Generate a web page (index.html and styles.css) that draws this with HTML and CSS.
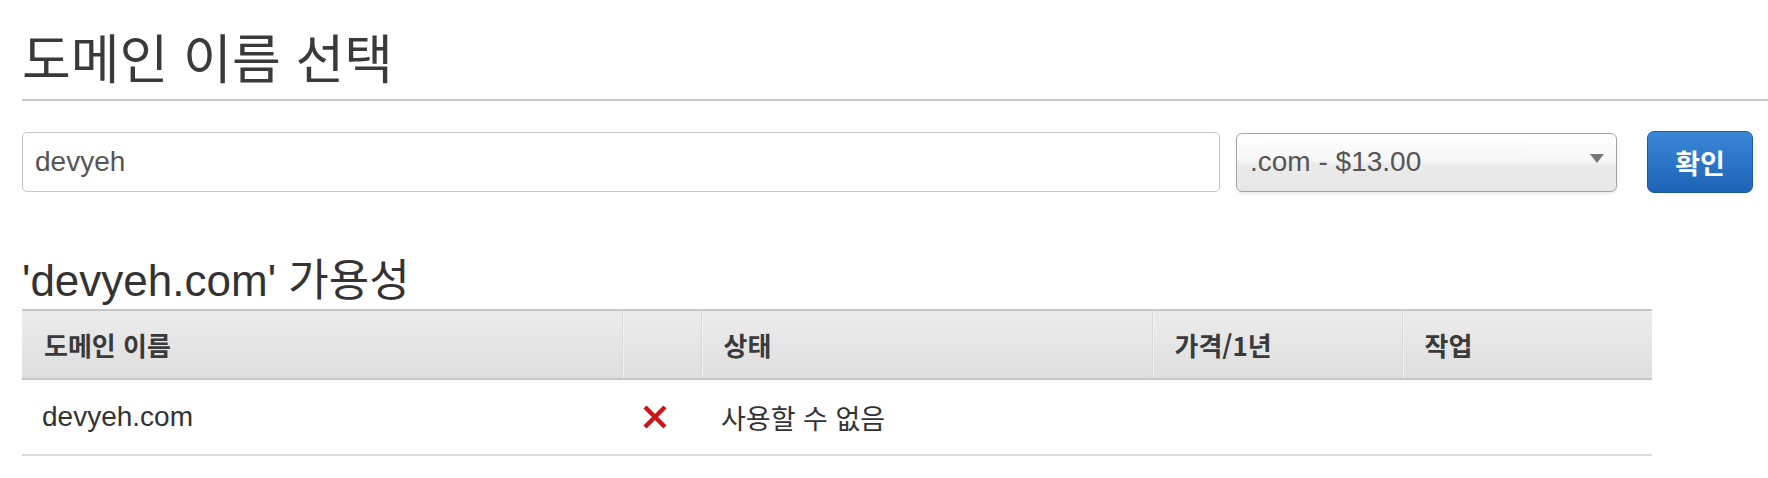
FILE: index.html
```html
<!DOCTYPE html>
<html lang="ko">
<head>
    <meta charset="utf-8">
    <title>도메인 이름 선택</title>
    <link rel="stylesheet" href="styles.css">
</head>
<body>
    <h1 class="page_title">도메인 이름 선택</h1>

    <form class="search_row">
        <input type="text" class="domain_input" value="devyeh">
        <div class="tld_select">
            <span>.com - $13.00</span>
        </div>
        <button type="button" class="check_button">확인</button>
    </form>

    <h2 class="result_title">'devyeh.com' 가용성</h2>
    <table class="result_table">
        <colgroup>
            <col class="col_name">
            <col class="col_icon">
            <col class="col_status">
            <col class="col_price">
            <col class="col_action">
        </colgroup>
        <thead>
            <tr>
                <th>도메인 이름</th>
                <th></th>
                <th>상태</th>
                <th>가격/1년</th>
                <th>작업</th>
            </tr>
        </thead>
        <tbody>
            <tr>
                <td class="name_cell">devyeh.com</td>
                <td class="icon_cell">
                    <svg width="26" height="26" viewBox="0 0 26 26">
                        <path d="M3 3 L23 23 M23 3 L3 23" stroke="#c8161b" stroke-width="4.5" stroke-linecap="butt"/>
                    </svg>
                </td>
                <td class="status_cell">사용할 수 없음</td>
                <td></td>
                <td></td>
            </tr>
        </tbody>
    </table>
</body>
</html>
```

FILE: styles.css
```css
body {
    margin: 0;
    padding: 0;
    font-family: "Liberation Sans", "Noto Sans CJK KR", sans-serif;
    color: #333;
    background-color: #fff;
}
.page_title {
    margin: 0 0 0 22px;
    padding: 22px 0 9px 0;
    font-family: "Noto Sans CJK KR", sans-serif;
    font-size: 53px;
    font-weight: 400;
    line-height: 68px;
    color: #3a3a3a;
    border-bottom: 2px solid #c8c8c8;
}
.search_row {
    display: flex;
    align-items: center;
    margin: 30px 0 0 22px;
}
.domain_input {
    box-sizing: border-box;
    width: 1198px;
    height: 60px;
    padding: 0 12px;
    border: 1px solid #c4c4c4;
    border-radius: 5px;
    font-family: "Liberation Sans", sans-serif;
    font-size: 28px;
    color: #555;
    outline: none;
}
.tld_select {
    position: relative;
    box-sizing: border-box;
    width: 381px;
    height: 59px;
    margin-left: 16px;
    padding: 0 13px;
    display: flex;
    align-items: center;
    border: 1.5px solid #a4a4a4;
    border-radius: 6px;
    background: linear-gradient(#ffffff 0%, #f7f7f7 45%, #ebebeb 55%, #e6e6e6 100%);
    box-shadow: 0 2px 3px rgba(0, 0, 0, 0.08);
    font-size: 28px;
    color: #555;
}
.tld_select::after {
    content: "";
    position: absolute;
    right: 12px;
    top: 20px;
    border-left: 7px solid transparent;
    border-right: 7px solid transparent;
    border-top: 9px solid #777;
}
.check_button {
    box-sizing: border-box;
    width: 106px;
    height: 62px;
    margin-left: 30px;
    border: 1px solid #1c5aa6;
    border-radius: 7px;
    background: linear-gradient(#3a87d8, #1d62b5);
    color: #fff;
    font-family: "Noto Sans CJK KR", sans-serif;
    font-size: 27px;
    font-weight: 700;
    cursor: pointer;
}
.result_title {
    margin: 62px 0 0 22px;
    height: 54px;
    font-size: 44px;
    font-weight: 400;
    line-height: 52px;
    color: #333;
}
.result_table {
    margin: 0 0 0 22px;
    width: 1630px;
    table-layout: fixed;
    border-collapse: collapse;
}
.col_name { width: 600px; }
.col_icon { width: 79px; }
.col_status { width: 451px; }
.col_price { width: 250px; }
.col_action { width: 250px; }
.result_table th {
    height: 67px;
    padding: 0 22px;
    text-align: left;
    font-family: "Noto Sans CJK KR", sans-serif;
    font-size: 26px;
    font-weight: 700;
    color: #3a3a3a;
    background: linear-gradient(#ececec, #dedede);
    border-top: 2px solid #c6c6c6;
    border-bottom: 2px solid #c6c6c6;
    border-left: 1px solid #d8d8d8;
    box-shadow: inset 1px 0 0 #f3f3f3;
}
.result_table th:first-child {
    border-left: none;
    box-shadow: none;
}
.result_table td {
    height: 74px;
    padding: 0 20px;
    border-bottom: 2px solid #dcdcdc;
    vertical-align: middle;
}
.name_cell {
    font-size: 28px;
    color: #333;
}
.icon_cell svg {
    display: block;
}
.status_cell {
    font-family: "Noto Sans CJK KR", sans-serif;
    font-size: 27px;
    color: #333;
}
```
